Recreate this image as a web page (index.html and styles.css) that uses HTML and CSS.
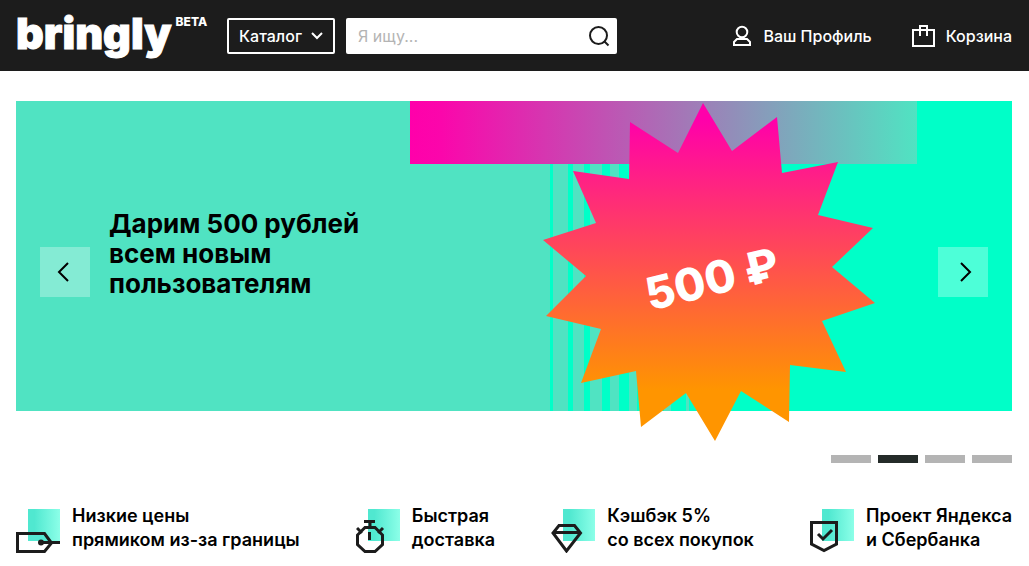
FILE: index.html
```html
<!DOCTYPE html>
<html lang="ru">
<head>
  <meta charset="UTF-8">
  <meta name="viewport" content="width=device-width, initial-scale=1.0">
  <title>Bringly</title>
  <link rel="stylesheet" href="styles.css">
</head>
<body>
  <header class="header">
    <a class="logo" href="#">bringly<span class="beta">BETA</span></a>
    <button class="catalog" type="button">
      Каталог
      <svg width="12" height="8" viewBox="0 0 12 8"><path d="M1 1l5 5 5-5" fill="none" stroke="#fff" stroke-width="2"/></svg>
    </button>
    <form class="search">
      <input type="text" placeholder="Я ищу..." aria-label="Я ищу">
      <button type="submit" aria-label="Найти">
        <svg width="22" height="22" viewBox="0 0 22 22" fill="none" stroke="#1c1c1c" stroke-width="2"><circle cx="10.500" cy="10.500" r="8.500"/><path d="M16 16l4.500 4.500"/></svg>
      </button>
    </form>
    <nav class="user">
      <a href="#">
        <svg width="20" height="22" viewBox="0 0 20 22" fill="none" stroke="#fff" stroke-width="2"><circle cx="10" cy="7" r="5.300"/><path d="M2 20v-3l3-3h10l3 3v3z"/></svg>
        Ваш Профиль
      </a>
      <a href="#">
        <svg width="23" height="22" viewBox="0 0 23 22" fill="none" stroke="#fff" stroke-width="2"><path d="M1 5h21v16H1zM8 11V1h7v10"/></svg>
        Корзина
      </a>
    </nav>
  </header>

  <main>
    <section class="hero">
      <svg class="hero-art" viewBox="0 0 996 341">
        <defs>
          <linearGradient id="ribbon">
            <stop offset="0" stop-color="#ff00aa"/>
            <stop offset="0.060" stop-color="#fb06ab"/>
            <stop offset="1" stop-color="#50e3c2"/>
          </linearGradient>
          <linearGradient id="burst" x1="0" y1="0" x2="0" y2="1">
            <stop offset="0.050" stop-color="#ff00aa"/>
            <stop offset="0.850" stop-color="#ff9500"/>
          </linearGradient>
        </defs>
        <path fill="#50e3c2" d="M0 0h996v310H0z"/>
        <path fill="#00ffc8" d="M534 0h3v310h-3zM552 0h5v310h-5zM568 0h6v310h-6zM586 0h8v310h-8zM603 0h10v310h-10zM621 0h10v310h-10zM638 0h10v310h-10zM655 0h15v310h-15zM673 0h323v310H673z"/>
        <path fill="url(#ribbon)" d="M394 0h507v63H394z"/>
        <polygon fill="url(#burst)" points="614,21 662,52 687,2 716,50 761,16 766,72 822,61 802,114 857,127 816,166 859,202 806,220 830,271 774,264 773,321 725,290 699,340 670,292 625,326 620,270 565,282 585,228 530,215 570,175 527,139 580,122 557,70 613,78"/>
        <text class="amount" transform="translate(634 210) rotate(-14)">500 ₽</text>
      </svg>
      <h1>Дарим 500 рублей<br>всем новым<br>пользователям</h1>
      <button class="arrow prev" type="button" aria-label="Назад">
        <svg width="12" height="20" viewBox="0 0 12 20"><path d="M11 1L2 10l9 9" fill="none" stroke="#000" stroke-width="2"/></svg>
      </button>
      <button class="arrow next" type="button" aria-label="Вперёд">
        <svg width="12" height="20" viewBox="0 0 12 20"><path d="M1 1l9 9-9 9" fill="none" stroke="#000" stroke-width="2"/></svg>
      </button>
    </section>

    <div class="dots">
      <button type="button" aria-label="Слайд 1"></button>
      <button class="active" type="button" aria-label="Слайд 2"></button>
      <button type="button" aria-label="Слайд 3"></button>
      <button type="button" aria-label="Слайд 4"></button>
    </div>

    <svg class="defs" width="0" height="0">
      <linearGradient id="mint">
        <stop offset="0.200" stop-color="#50e8d0"/>
        <stop offset="1" stop-color="#8cffe8"/>
      </linearGradient>
    </svg>

    <ul class="features">
      <li>
        <svg width="44" height="46" viewBox="0 0 44 46">
          <path fill="url(#mint)" d="M12 2h32v32H12z"/>
          <path d="M1.500 26.500h27l7 9.500-7 8.500h-27z" fill="#fff"/>
          <path d="M12 26h16l6 8H12z" fill="#54e9d2"/>
          <path d="M1.500 26.500h27l7 9.500-7 8.500h-27zM25 35.500h19" fill="none" stroke="#1c1c1c" stroke-width="3"/>
          <circle cx="25" cy="35.500" r="3" fill="#1c1c1c"/>
        </svg>
        <span>Низкие цены<br>прямиком из-за границы</span>
      </li>
      <li>
        <svg width="44" height="46" viewBox="0 0 44 46">
          <path fill="url(#mint)" d="M12 2h32v32H12z"/>
          <path d="M9 20.500h10l7.500 7.500v9.500l-7.500 7H9l-7.500-7V28zM14 20v-5M8 14.500h11M1 21l5 5M27 21l-5 5M13.500 25v8" fill="none" stroke="#1c1c1c" stroke-width="3"/>
        </svg>
        <span>Быстрая<br>доставка</span>
      </li>
      <li>
        <svg width="44" height="46" viewBox="0 0 44 46">
          <path fill="url(#mint)" d="M12 2h32v32H12z"/>
          <path d="M8 18.500h15.500l6 7.500-14 18L2 26zM2 25.500h27" fill="none" stroke="#1c1c1c" stroke-width="3"/>
        </svg>
        <span>Кэшбэк 5%<br>со всех покупок</span>
      </li>
      <li>
        <svg width="44" height="46" viewBox="0 0 44 46">
          <path fill="url(#mint)" d="M12 2h32v32H12z"/>
          <path d="M1.500 15.500h25v21.500L14 43.500 1.500 37zM8 27l5 5 9-9" fill="none" stroke="#1c1c1c" stroke-width="3"/>
        </svg>
        <span>Проект Яндекса<br>и Сбербанка</span>
      </li>
    </ul>
  </main>
</body>
</html>
```

FILE: styles.css
```css
* {
  box-sizing: border-box;
}
body {
  margin: 0;
  font-family: Inter, "Liberation Sans", sans-serif;
  font-size: 16px;
  color: #000;
  background: #fff;
}
button {
  margin: 0;
  padding: 0;
  border: none;
  font: inherit;
  cursor: pointer;
}
svg {
  display: block;
  flex: none;
}
.header {
  display: flex;
  align-items: center;
  height: 71px;
  padding: 0 17px 0 16px;
  background: #1c1c1c;
  color: #fff;
  font-weight: 500;
}
.header a {
  color: #fff;
  text-decoration: none;
}
.logo {
  display: flex;
  align-items: flex-start;
  gap: 4px;
  width: 211px;
  padding-bottom: 6px;
  font-size: 43px;
  font-weight: 900;
  line-height: 40px;
  -webkit-text-stroke: 1px #fff;
}
.beta {
  padding-top: 3px;
  font-size: 12px;
  font-weight: 800;
  line-height: 12px;
  -webkit-text-stroke: 0;
}
.catalog {
  display: flex;
  align-items: center;
  justify-content: center;
  gap: 9px;
  width: 108px;
  height: 36px;
  margin-right: 11px;
  border: 2px solid #fff;
  border-radius: 2px;
  background: none;
  color: #fff;
}
.search {
  display: flex;
  align-items: center;
  flex: 0 1 271px;
  min-width: 0;
  height: 36px;
  padding: 0 7px 0 12px;
  border-radius: 2px;
  background: #fff;
}
.search input {
  flex: 1;
  min-width: 0;
  border: none;
  outline: none;
  padding: 0;
  font: 400 16px Inter, sans-serif;
}
.search input::placeholder {
  color: #b4b4b4;
}
.search button {
  background: none;
}
.user {
  display: flex;
  gap: 40px;
  margin-left: auto;
}
.user a {
  display: flex;
  align-items: center;
  gap: 11px;
}
main {
  padding: 30px 17px 0 16px;
}
.hero {
  position: relative;
}
.hero-art {
  width: 100%;
}
.amount {
  fill: #fff;
  font-size: 45px;
  font-weight: 800;
}
.hero h1 {
  position: absolute;
  top: 108px;
  left: 93px;
  margin: 0;
  font-size: 26px;
  font-weight: 700;
  line-height: 30px;
}
.arrow {
  position: absolute;
  top: 146px;
  display: flex;
  align-items: center;
  justify-content: center;
  width: 50px;
  height: 50px;
  background: rgba(255, 255, 255, 0.3);
}
.prev {
  left: 24px;
  padding-right: 5px;
}
.next {
  right: 24px;
  padding-left: 5px;
}
.dots {
  display: flex;
  justify-content: flex-end;
  gap: 7px;
  margin-top: 13px;
}
.dots button {
  width: 40px;
  height: 8px;
  background: #b4b4b4;
}
.dots .active {
  background: #242b29;
}
.defs {
  position: absolute;
}
.features {
  display: flex;
  justify-content: space-between;
  margin: 41px 0 0;
  padding: 3px 0 0;
  list-style: none;
  font-size: 18px;
  font-weight: 600;
  line-height: 24px;
}
.features li {
  display: flex;
  gap: 12px;
  white-space: nowrap;
}
.features span {
  margin-top: -3px;
}
```
